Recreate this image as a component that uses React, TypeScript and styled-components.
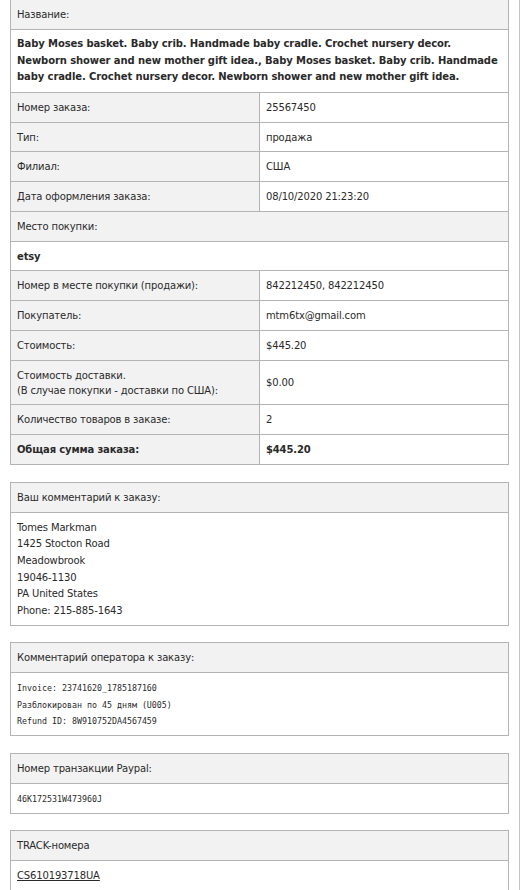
import React from 'react';
import styled, { createGlobalStyle } from 'styled-components';

const GlobalStyle = createGlobalStyle`
  html, body {
    margin: 0;
    padding: 0;
    background: #fff;
  }
  body {
    font-family: "DejaVu Sans", Verdana, sans-serif;
    font-size: 10px;
    letter-spacing: -0.15px;
    color: #2a2a2a;
  }
`;

const Page = styled.div`
  width: 499px;
  padding: 0 10px 1px;
  margin-top: -1px;
  border-right: 1px solid #c4c4c4;
  min-height: 900px;
`;

const InfoTable = styled.table`
  width: 100%;
  border-collapse: collapse;
  table-layout: fixed;
`;

const Cell = styled.td<{ $shaded?: boolean; $bold?: boolean; $title?: boolean }>`
  border: 1px solid #b4b4b4;
  padding: ${p => (p.$title ? '6.5px 6px 6px' : '7px 6px 6.75px')};
  background: ${p => (p.$shaded ? '#f2f2f2' : '#fff')};
  font-weight: ${p => (p.$bold ? 'bold' : 'normal')};
  line-height: ${p => (p.$title ? '16.5px' : '15px')};
  letter-spacing: ${p => (p.$title ? '-0.1px' : '-0.15px')};
  vertical-align: middle;
  text-align: left;
`;

const Box = styled.section<{ $first?: boolean }>`
  margin-top: ${p => (p.$first ? '17px' : '16.5px')};
  border: 1px solid #b4b4b4;
`;

const BoxHead = styled.div`
  background: #f2f2f2;
  border-bottom: 1px solid #b4b4b4;
  padding: 7px 6px;
  line-height: 15px;
`;

const BoxBody = styled.div<{ $mono?: boolean }>`
  padding: 7px 6px 5.5px;
  line-height: ${p => (p.$mono ? '16.5px' : '16.6px')};
  font-family: ${p => (p.$mono ? '"DejaVu Sans Mono", monospace' : 'inherit')};
  font-size: ${p => (p.$mono ? '8.3px' : '10px')};
  letter-spacing: ${p => (p.$mono ? '0' : '-0.15px')};
`;

const TrackLink = styled.a`
  color: #2a2a2a;
  text-decoration: underline;
`;

type Row = { label: React.ReactNode; value: React.ReactNode; bold?: boolean };

const rowsTop: Row[] = [
  { label: 'Номер заказа:', value: '25567450' },
  { label: 'Тип:', value: 'продажа' },
  { label: 'Филиал:', value: 'США' },
  { label: 'Дата оформления заказа:', value: '08/10/2020 21:23:20' },
];

const rowsBottom: Row[] = [
  { label: 'Номер в месте покупки (продажи):', value: '842212450, 842212450' },
  { label: 'Покупатель:', value: 'mtm6tx@gmail.com' },
  { label: 'Стоимость:', value: '$445.20' },
  {
    label: (
      <>
        Стоимость доставки.
        <br />
        (В случае покупки - доставки по США):
      </>
    ),
    value: '$0.00',
  },
  { label: 'Количество товаров в заказе:', value: '2' },
  { label: 'Общая сумма заказа:', value: '$445.20', bold: true },
];

const title =
  'Baby Moses basket. Baby crib. Handmade baby cradle. Crochet nursery decor. Newborn shower and new mother gift idea., Baby Moses basket. Baby crib. Handmade baby cradle. Crochet nursery decor. Newborn shower and new mother gift idea.';

const address = [
  'Tomes Markman',
  '1425 Stocton Road',
  'Meadowbrook',
  '19046-1130',
  'PA United States',
  'Phone: 215-885-1643',
];

const operatorNotes = [
  'Invoice: 23741620_1785187160',
  'Разблокирован по 45 дням (U005)',
  'Refund ID: 8W910752DA4567459',
];

const renderRow = (r: Row, i: number) => (
  <tr key={i}>
    <Cell $shaded $bold={r.bold}>{r.label}</Cell>
    <Cell $bold={r.bold}>{r.value}</Cell>
  </tr>
);

export default function App() {
  return (
    <>
      <GlobalStyle />
      <Page>
        <InfoTable>
          <tbody>
            <tr>
              <Cell colSpan={2} $shaded>Название:</Cell>
            </tr>
            <tr>
              <Cell colSpan={2} $bold $title>{title}</Cell>
            </tr>
            {rowsTop.map(renderRow)}
            <tr>
              <Cell colSpan={2} $shaded>Место покупки:</Cell>
            </tr>
            <tr>
              <Cell colSpan={2} $bold>etsy</Cell>
            </tr>
            {rowsBottom.map(renderRow)}
          </tbody>
        </InfoTable>

        <Box $first>
          <BoxHead>Ваш комментарий к заказу:</BoxHead>
          <BoxBody>
            {address.map(line => (
              <div key={line}>{line}</div>
            ))}
          </BoxBody>
        </Box>

        <Box>
          <BoxHead>Комментарий оператора к заказу:</BoxHead>
          <BoxBody $mono>
            {operatorNotes.map(line => (
              <div key={line}>{line}</div>
            ))}
          </BoxBody>
        </Box>

        <Box>
          <BoxHead>Номер транзакции Paypal:</BoxHead>
          <BoxBody $mono>46K172531W473960J</BoxBody>
        </Box>

        <Box>
          <BoxHead>TRACK-номера</BoxHead>
          <BoxBody>
            <TrackLink href="#">CS610193718UA</TrackLink>
          </BoxBody>
        </Box>
      </Page>
    </>
  );
}
